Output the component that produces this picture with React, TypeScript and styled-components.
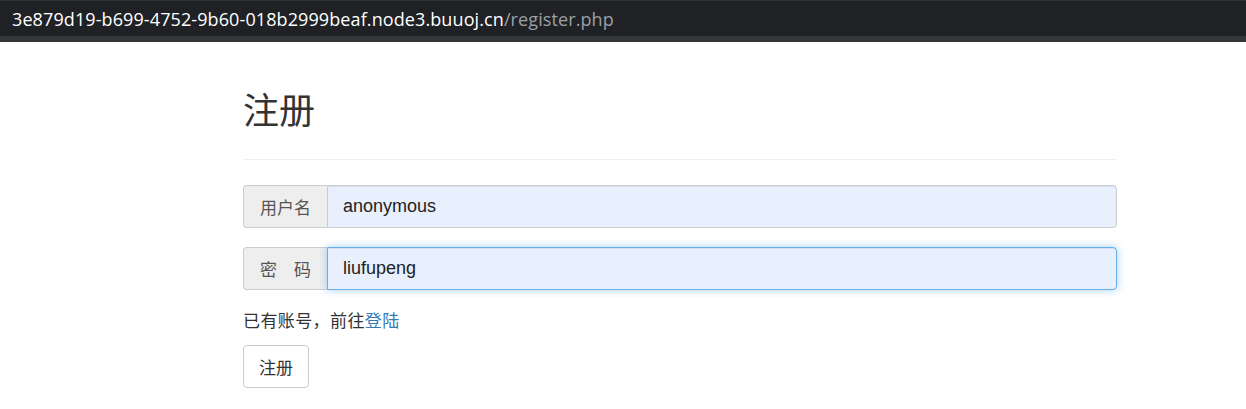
import React from "react";
import styled, { createGlobalStyle } from "styled-components";

const Global = createGlobalStyle`
  html, body { margin: 0; padding: 0; background: #fff; }
  body {
    font-family: "Liberation Sans", Arial, "Noto Sans CJK SC", sans-serif;
    color: #333;
    width: 1246px;
    height: 409px;
    overflow: hidden;
  }
  * { box-sizing: border-box; }
`;

const AddressBar = styled.div`
  height: 36px;
  background: #202124;
  border-top: 1px solid #2e2f33;
  display: flex;
  align-items: center;
  padding-left: 12px;
  font-family: "Open Sans", "Liberation Sans", sans-serif;
  font-size: 18px;
  letter-spacing: 0.1px;
`;

const Host = styled.span`
  color: #ffffff;
`;

const Path = styled.span`
  color: #9aa0a6;
`;

const Strip = styled.div`
  height: 6px;
  background: #35363a;
`;

const Container = styled.main`
  margin-left: 243px;
  width: 874px;
`;

const PageHeader = styled.header`
  margin-top: 48px;
  padding-bottom: 25px;
  border-bottom: 1px solid #eee;
`;

const Title = styled.h1`
  margin: 0;
  font-size: 36px;
  font-weight: 400;
  line-height: 44px;
  color: #333;
`;

const Form = styled.form`
  margin-top: 25px;
  display: flex;
  flex-direction: column;
`;

const InputGroup = styled.div`
  display: flex;
  height: 43px;
  margin-bottom: 19px;
`;

const Addon = styled.span`
  display: flex;
  align-items: center;
  padding: 0 16px;
  background: #eee;
  border: 1px solid #ccc;
  border-right: none;
  border-radius: 4px 0 0 4px;
  font-size: 17px;
  color: #555;
  white-space: pre;
`;

const Input = styled.input<{ $focused?: boolean }>`
  flex: 1;
  height: 100%;
  padding: 0 15px;
  font-family: "Liberation Sans", Arial, sans-serif;
  font-size: 18px;
  color: #222;
  background: #e8f0fe;
  border: 1px solid ${(p) => (p.$focused ? "#66afe9" : "#ccc")};
  border-radius: 0 4px 4px 0;
  outline: none;
  box-shadow: ${(p) =>
    p.$focused
      ? "inset 0 1px 1px rgba(0,0,0,.075), 0 0 8px rgba(102,175,233,.6)"
      : "inset 0 1px 1px rgba(0,0,0,.075)"};
`;

const Hint = styled.p`
  margin: 1px 0 0;
  font-size: 17px;
  line-height: 24px;
  letter-spacing: 0.4px;
  color: #333;
`;

const Link = styled.a`
  color: #337ab7;
  text-decoration: none;
`;

const Button = styled.button`
  align-self: flex-start;
  margin-top: 11px;
  height: 43px;
  padding: 0 15px;
  font-family: "Liberation Sans", Arial, "Noto Sans CJK SC", sans-serif;
  font-size: 17px;
  color: #333;
  background: #fff;
  border: 1px solid #ccc;
  border-radius: 4px;
`;

export default function App() {
  return (
    <>
      <Global />
      <AddressBar>
        <Host>3e879d19-b699-4752-9b60-018b2999beaf.node3.buuoj.cn</Host>
        <Path>/register.php</Path>
      </AddressBar>
      <Strip />
      <Container>
        <PageHeader>
          <Title>注册</Title>
        </PageHeader>
        <Form onSubmit={(e) => e.preventDefault()}>
          <InputGroup>
            <Addon>用户名</Addon>
            <Input defaultValue="anonymous" />
          </InputGroup>
          <InputGroup>
            <Addon>{"密\u3000码"}</Addon>
            <Input $focused type="text" defaultValue="liufupeng" />
          </InputGroup>
          <Hint>
            已有账号，前往<Link href="#">登陆</Link>
          </Hint>
          <Button type="button">注册</Button>
        </Form>
      </Container>
    </>
  );
}
